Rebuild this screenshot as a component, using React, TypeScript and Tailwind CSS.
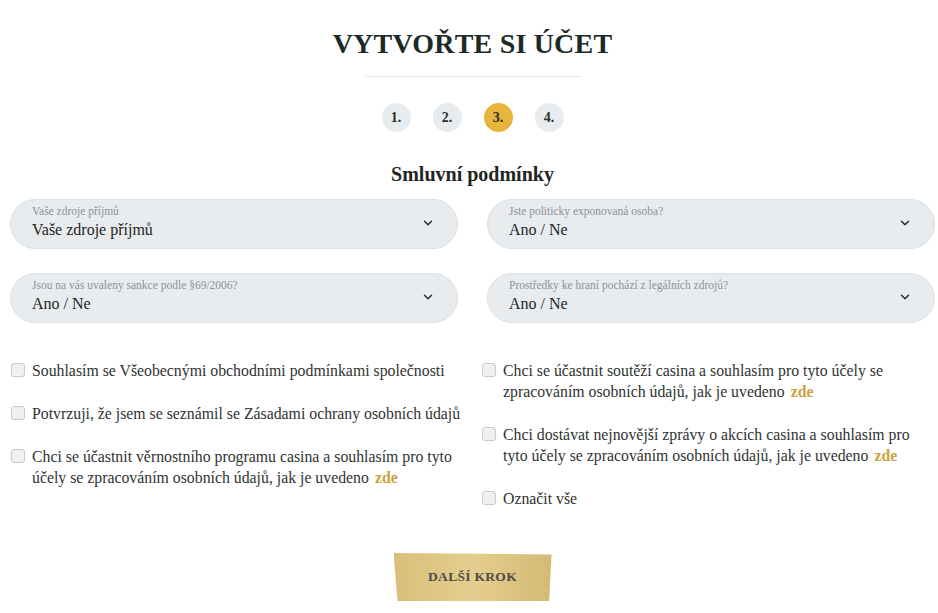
import React, { useState } from 'react';
import { ChevronDown } from 'lucide-react';

const serif = { fontFamily: '"Liberation Serif", "DejaVu Serif", serif' };

interface SelectProps {
  label: string;
  value: string;
}

function SelectField({ label, value }: SelectProps) {
  return (
    <div className="relative h-[50px] rounded-full bg-[#e9ecef] border border-[#dde1e4] pl-[21px] pr-10 pt-[5px] cursor-pointer">
      <div className="text-[11.5px] leading-[12px] text-[#8d9296]">{label}</div>
      <div className="mt-[3px] text-[16px] leading-[20px] text-[#1f2422]">{value}</div>
      <ChevronDown
        className="absolute right-[22px] top-[16px] w-[14px] h-[14px] text-[#2a2f2d]"
        strokeWidth={2.6}
      />
    </div>
  );
}

interface CheckProps {
  children: React.ReactNode;
}

function CheckRow({ children }: CheckProps) {
  const [checked, setChecked] = useState(false);
  return (
    <label className="flex items-start gap-[7px] cursor-pointer">
      <input
        type="checkbox"
        checked={checked}
        onChange={() => setChecked(!checked)}
        className="sr-only"
      />
      <span
        className={
          'mt-[3px] ml-[1px] shrink-0 w-[14px] h-[14px] rounded-[3px] border border-[#c5cacf] ' +
          (checked ? 'bg-[#e6b43c]' : 'bg-[#eef0f2]')
        }
      />
      <span className="text-[15.8px] leading-[21px] text-[#2e3331]">{children}</span>
    </label>
  );
}

function Zde() {
  return <span className="pl-[6px] font-bold text-[#c9a23c] cursor-pointer">zde</span>;
}

export default function App() {
  const steps = ['1.', '2.', '3.', '4.'];

  return (
    <div className="min-h-screen bg-white" style={serif}>
      <div className="w-[925px] ml-[10px] pt-[27px] pb-[13px]">
        <h1 className="text-center text-[28px] leading-[34px] font-bold text-[#1b2a26] tracking-[0.2px]">
          VYTVOŘTE SI ÚČET
        </h1>
        <div className="mx-auto mt-[15px] w-[216px] h-px bg-[#e8eaec]" />

        <div className="mt-[26px] flex justify-center gap-[22px]">
          {steps.map((s, i) => (
            <div
              key={s}
              className={
                'w-[29px] h-[29px] rounded-full flex items-center justify-center text-[14px] font-bold text-[#2b2f2d] ' +
                (i === 2 ? 'bg-[#e7b43c]' : 'bg-[#e9ecef]')
              }
            >
              {s}
            </div>
          ))}
        </div>

        <h2 className="mt-[30px] text-center text-[20px] leading-[24px] font-bold text-[#1f2624]">
          Smluvní podmínky
        </h2>

        <div className="mt-[13px] grid grid-cols-2 gap-x-[29px] gap-y-[24px]">
          <SelectField label="Vaše zdroje příjmů" value="Vaše zdroje příjmů" />
          <SelectField label="Jste politicky exponovaná osoba?" value="Ano / Ne" />
          <SelectField label="Jsou na vás uvaleny sankce podle §69/2006?" value="Ano / Ne" />
          <SelectField label="Prostředky ke hraní pochází z legálních zdrojů?" value="Ano / Ne" />
        </div>

        <div className="mt-[37px] grid grid-cols-[460px_1fr] gap-x-[17px]">
          <div className="flex flex-col gap-[22px]">
            <CheckRow>Souhlasím se Všeobecnými obchodními podmínkami společnosti</CheckRow>
            <CheckRow>Potvrzuji, že jsem se seznámil se Zásadami ochrany osobních údajů</CheckRow>
            <div className="pr-[14px]">
              <CheckRow>
                Chci se účastnit věrnostního programu casina a souhlasím pro tyto účely se
                zpracováním osobních údajů, jak je uvedeno
                <Zde />
              </CheckRow>
            </div>
          </div>
          <div className="flex flex-col gap-[22px] -ml-[6px]">
            <CheckRow>
              Chci se účastnit soutěží casina a souhlasím pro tyto účely se zpracováním osobních
              údajů, jak je uvedeno
              <Zde />
            </CheckRow>
            <CheckRow>
              Chci dostávat nejnovější zprávy o akcích casina a souhlasím pro tyto účely se
              zpracováním osobních údajů, jak je uvedeno
              <Zde />
            </CheckRow>
            <CheckRow>Označit vše</CheckRow>
          </div>
        </div>

        <div className="mt-[44px] flex justify-center">
          <button className="w-[158px] h-[48px] bg-gradient-to-r from-[#d9bf7a] via-[#e4cd8f] to-[#d5ba74] [clip-path:polygon(0_0,100%_3%,98.5%_100%,2.5%_100%)] text-[13.5px] font-bold tracking-[0.3px] text-[#4d4e45]">
            DALŠÍ KROK
          </button>
        </div>
      </div>
    </div>
  );
}
